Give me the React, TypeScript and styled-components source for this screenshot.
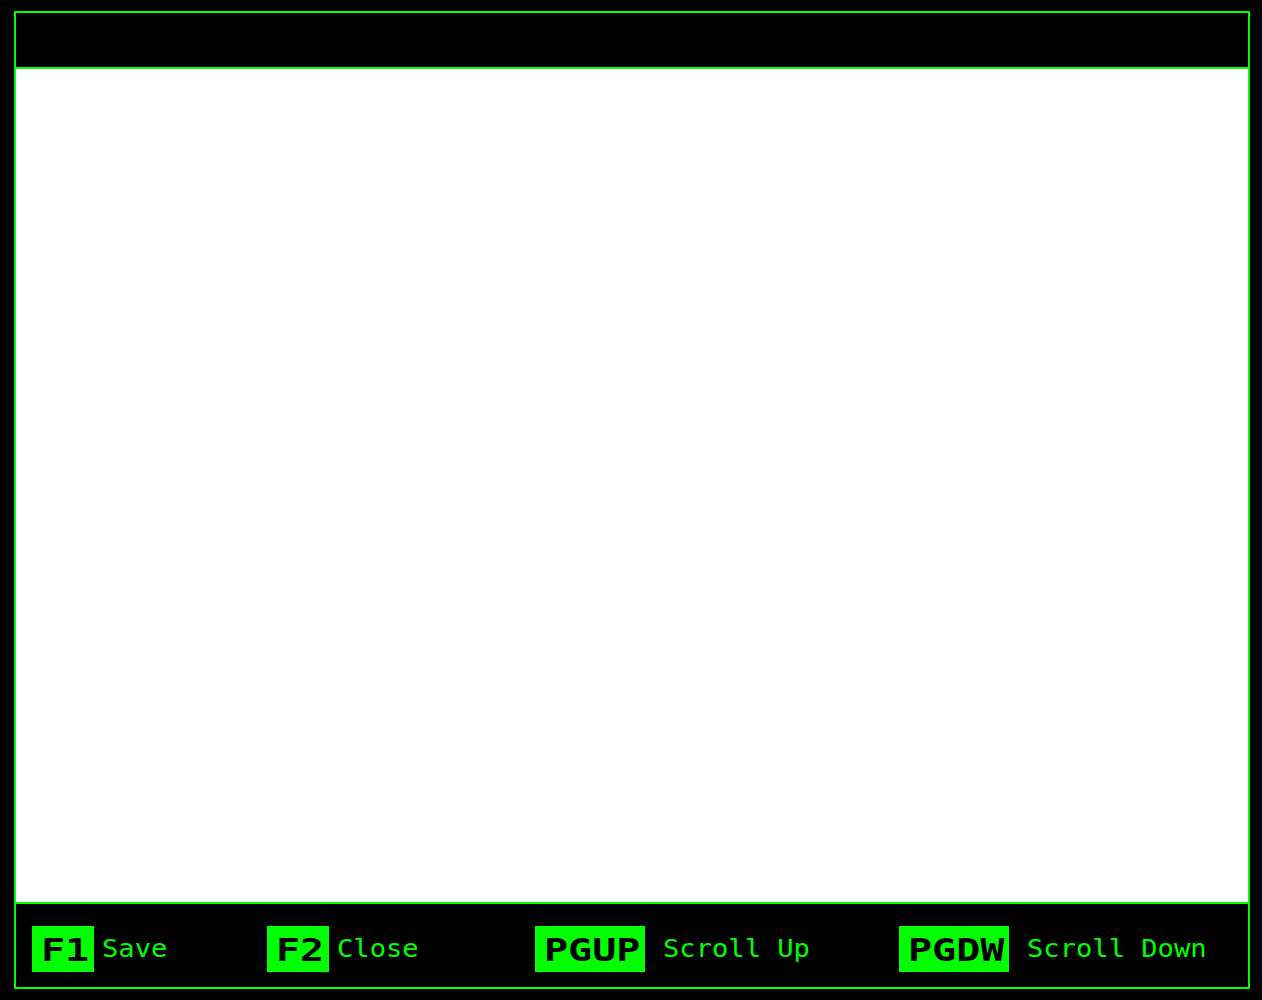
import React from "react";
import styled, { createGlobalStyle } from "styled-components";

const GREEN = "#00ff00";

const Global = createGlobalStyle`
  html, body {
    margin: 0;
    padding: 0;
    background: #000;
  }
  body {
    font-family: "DejaVu Sans Mono", monospace;
  }
`;

const Page = styled.div`
  padding: 11px 12px 11px 14px;
  background: #000;
`;

const Frame = styled.div`
  box-sizing: border-box;
  width: 1236px;
  height: 978px;
  border: 2px solid ${GREEN};
  display: flex;
  flex-direction: column;
  background: #000;
`;

const Header = styled.div`
  height: 54px;
  flex: none;
  background: #000;
  border-bottom: 2px solid ${GREEN};
`;

const Content = styled.div`
  flex: 1;
  background: #fff;
`;

const Footer = styled.div`
  box-sizing: border-box;
  height: 85px;
  flex: none;
  border-top: 2px solid ${GREEN};
  background: #000;
  display: flex;
  align-items: center;
  padding: 6px 0 0 16px;
`;

const Item = styled.div<{ $width?: number; $gap: number }>`
  display: flex;
  align-items: center;
  gap: ${(p) => p.$gap}px;
  flex: none;
  width: ${(p) => (p.$width ? `${p.$width}px` : "auto")};
`;

const Key = styled.span<{ $chars: number }>`
  display: flex;
  align-items: center;
  box-sizing: border-box;
  flex: none;
  width: ${(p) => 14 + 24 * p.$chars}px;
  height: 46px;
  padding: 3px 0 0 9px;
  background: ${GREEN};
`;

const KeyText = styled.span`
  display: inline-block;
  color: #000;
  font-family: "DejaVu Sans Mono", monospace;
  font-weight: bold;
  font-size: 32px;
  line-height: 1;
  white-space: pre;
  transform: scaleX(1.25);
  transform-origin: left center;
`;

const Label = styled.span`
  display: inline-block;
  color: ${GREEN};
  font-family: "DejaVu Sans Mono", monospace;
  font-size: 24px;
  line-height: 1;
  padding-top: 1px;
  white-space: pre;
  transform: scaleX(1.13);
  transform-origin: left center;
`;

const keys = [
  { k: "F1", label: "Save", width: 235, gap: 8 },
  { k: "F2", label: "Close", width: 268, gap: 8 },
  { k: "PGUP", label: "Scroll Up", width: 364, gap: 18 },
  { k: "PGDW", label: "Scroll Down", width: 0, gap: 18 },
];

export default function App() {
  return (
    <>
      <Global />
      <Page>
        <Frame>
          <Header />
          <Content />
          <Footer>
            {keys.map((it) => (
              <Item key={it.k} $width={it.width || undefined} $gap={it.gap}>
                <Key $chars={it.k.length}>
                  <KeyText>{it.k}</KeyText>
                </Key>
                <Label>{it.label}</Label>
              </Item>
            ))}
          </Footer>
        </Frame>
      </Page>
    </>
  );
}
